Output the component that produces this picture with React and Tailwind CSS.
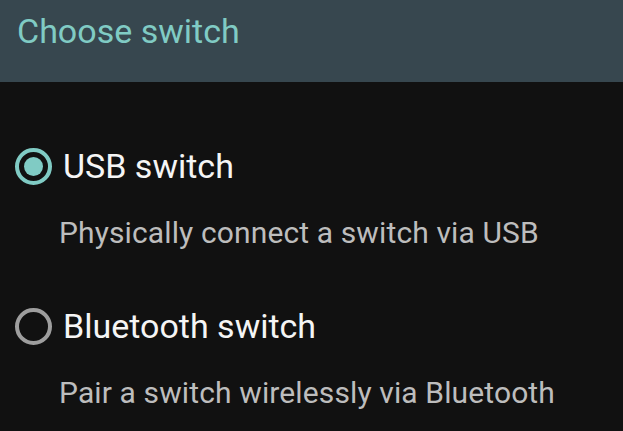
import React from "react";

function Radio({ checked }) {
  if (checked) {
    return (
      <div className="flex h-[37px] w-[37px] shrink-0 items-center justify-center rounded-full border-[4px] border-[#80cbc4]">
        <div className="h-[19px] w-[19px] rounded-full bg-[#80cbc4]" />
      </div>
    );
  }
  return <div className="h-[37px] w-[37px] shrink-0 rounded-full border-[4px] border-[#9e9e9e]" />;
}

function Option({ checked, title, subtitle, className }) {
  return (
    <div className={className}>
      <div className="flex h-10 items-center gap-[11px] pl-[15px]">
        <Radio checked={checked} />
        <span className="text-[34px] leading-10 text-[#f5f5f5]">{title}</span>
      </div>
      <div className="mt-[31px] pl-[59px] text-[30px] leading-8 tracking-[0.12px] text-[#bdbdbd]">{subtitle}</div>
    </div>
  );
}

export default function App() {
  return (
    <div
      className="h-[431px] w-[623px] overflow-hidden bg-[#111111]"
      style={{ fontFamily: "Roboto, 'Noto Sans', sans-serif" }}
    >
      <div className="h-[82px] bg-[#37474f] pl-[17px] pt-[11px]">
        <span className="text-[34px] leading-10 text-[#80cbc4]">Choose switch</span>
      </div>
      <div className="pt-[64px]">
        <Option checked title="USB switch" subtitle="Physically connect a switch via USB" />
        <Option
          className="mt-[57px]"
          title="Bluetooth switch"
          subtitle="Pair a switch wirelessly via Bluetooth"
        />
      </div>
    </div>
  );
}
